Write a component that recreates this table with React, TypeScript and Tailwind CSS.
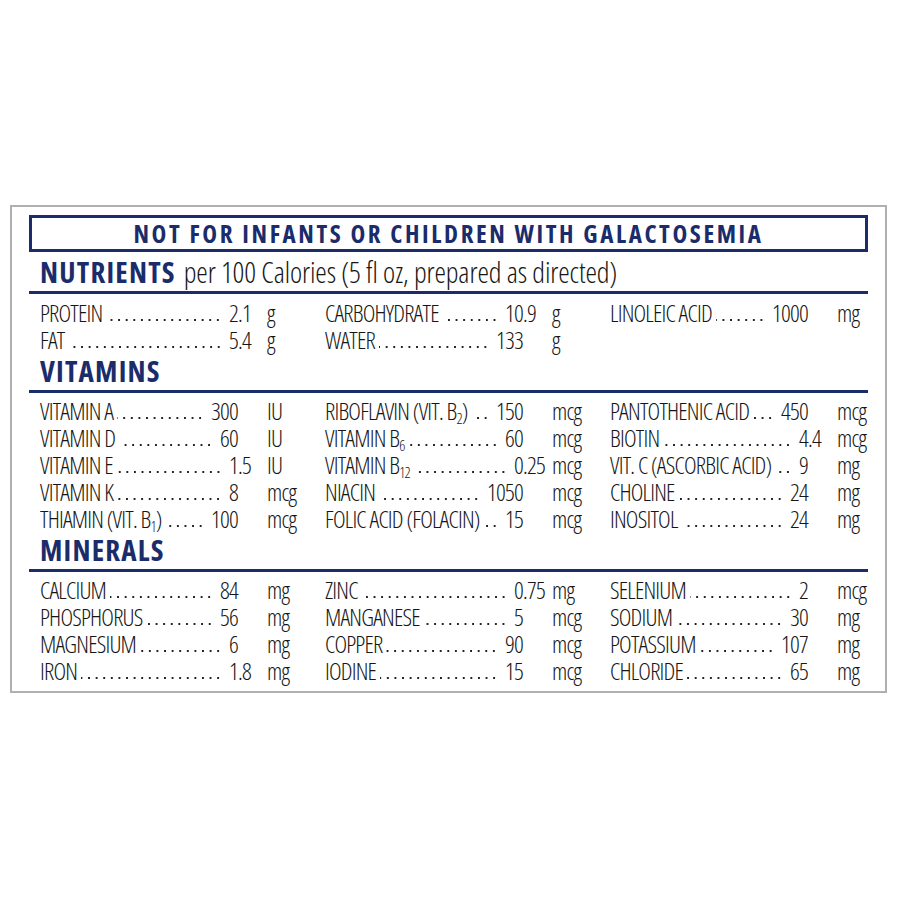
import type { ReactNode } from "react";

interface Item {
  name: ReactNode;
  value: string;
  unit: string;
}

const B = (n: string) => <sub className="text-[15px]">{n}</sub>;

const nutrients: (Item | null)[][] = [
  [
    { name: "PROTEIN", value: "2.1", unit: "g" },
    { name: "CARBOHYDRATE", value: "10.9", unit: "g" },
    { name: "LINOLEIC ACID", value: "1000", unit: "mg" },
  ],
  [
    { name: "FAT", value: "5.4", unit: "g" },
    { name: "WATER", value: "133", unit: "g" },
    null,
  ],
];

const vitamins: (Item | null)[][] = [
  [
    { name: "VITAMIN A", value: "300", unit: "IU" },
    { name: <>RIBOFLAVIN (VIT. B{B("2")})</>, value: "150", unit: "mcg" },
    { name: "PANTOTHENIC ACID", value: "450", unit: "mcg" },
  ],
  [
    { name: "VITAMIN D", value: "60", unit: "IU" },
    { name: <>VITAMIN B{B("6")}</>, value: "60", unit: "mcg" },
    { name: "BIOTIN", value: "4.4", unit: "mcg" },
  ],
  [
    { name: "VITAMIN E", value: "1.5", unit: "IU" },
    { name: <>VITAMIN B{B("12")}</>, value: "0.25", unit: "mcg" },
    { name: "VIT. C (ASCORBIC ACID)", value: "9", unit: "mg" },
  ],
  [
    { name: "VITAMIN K", value: "8", unit: "mcg" },
    { name: "NIACIN", value: "1050", unit: "mcg" },
    { name: "CHOLINE", value: "24", unit: "mg" },
  ],
  [
    { name: <>THIAMIN (VIT. B{B("1")})</>, value: "100", unit: "mcg" },
    { name: "FOLIC ACID (FOLACIN)", value: "15", unit: "mcg" },
    { name: "INOSITOL", value: "24", unit: "mg" },
  ],
];

const minerals: (Item | null)[][] = [
  [
    { name: "CALCIUM", value: "84", unit: "mg" },
    { name: "ZINC", value: "0.75", unit: "mg" },
    { name: "SELENIUM", value: "2", unit: "mcg" },
  ],
  [
    { name: "PHOSPHORUS", value: "56", unit: "mg" },
    { name: "MANGANESE", value: "5", unit: "mcg" },
    { name: "SODIUM", value: "30", unit: "mg" },
  ],
  [
    { name: "MAGNESIUM", value: "6", unit: "mg" },
    { name: "COPPER", value: "90", unit: "mcg" },
    { name: "POTASSIUM", value: "107", unit: "mg" },
  ],
  [
    { name: "IRON", value: "1.8", unit: "mg" },
    { name: "IODINE", value: "15", unit: "mcg" },
    { name: "CHLORIDE", value: "65", unit: "mg" },
  ],
];

function Cell({ item }: { item: Item | null }) {
  if (!item) return <div />;
  const [whole, frac] = item.value.split(".");
  return (
    <div className="flex h-[27px] leading-[27px]">
      <div className="flex w-[198px]">
        <span className="whitespace-nowrap">{item.name}</span>
        {/* dot leader */}
        <span className="mt-[19px] mr-[7px] ml-[4px] h-[4px] min-w-0 flex-1 bg-[radial-gradient(circle,#222_1.1px,transparent_1.5px)] bg-[length:7.6px_4px] bg-right bg-repeat-x" />
        <span>{whole}</span>
      </div>
      <span className="w-[29px]">{frac ? "." + frac : ""}</span>
      <span>{item.unit}</span>
    </div>
  );
}

function Rows({ rows }: { rows: (Item | null)[][] }) {
  return (
    <div className="pl-[11px] text-[24px] font-light tracking-[-0.8px] text-[#161616]">
      {rows.map((row, i) => (
        <div key={i} className="grid grid-cols-[285px_285px_1fr]">
          {row.map((item, j) => (
            <Cell key={j} item={item} />
          ))}
        </div>
      ))}
    </div>
  );
}

function Heading({ title, note }: { title: string; note?: string }) {
  return (
    <div className="border-b-[3px] border-[#1b2c6b] pb-[5px]">
      <h2 className="pl-[11px] text-[29px] leading-[28px]">
        <span className="font-bold tracking-[1.2px] text-[#1b2c6b]">{title}</span>
        {note && <span className="ml-[8px] font-light tracking-[-0.1px] text-[#161616]">{note}</span>}
      </h2>
    </div>
  );
}

export default function App() {
  return (
    <div className="min-h-[900px] bg-white pt-[205px] pl-[10px]" style={{ fontFamily: '"Open Sans", sans-serif' }}>
      <div className="w-[877px] border-2 border-[#b0b0b0] px-[17px] pt-[8px] pb-[7px] font-stretch-condensed">
        <div className="flex h-[37px] items-center justify-center border-[3px] border-[#1b2c6b]">
          <p className="text-[25px] font-bold tracking-[2.6px] text-[#1b2c6b]">
            NOT FOR INFANTS OR CHILDREN WITH GALACTOSEMIA
          </p>
        </div>

        <div className="mt-[6px]">
          <Heading title="NUTRIENTS" note="per 100 Calories (5 fl oz, prepared as directed)" />
        </div>
        <div className="pt-[5px]">
          <Rows rows={nutrients} />
        </div>

        <div className="mt-[4px]">
          <Heading title="VITAMINS" />
        </div>
        <div className="pt-[4px]">
          <Rows rows={vitamins} />
        </div>

        <div className="mt-[4px]">
          <Heading title="MINERALS" />
        </div>
        <div className="pt-[4px]">
          <Rows rows={minerals} />
        </div>
      </div>
    </div>
  );
}
